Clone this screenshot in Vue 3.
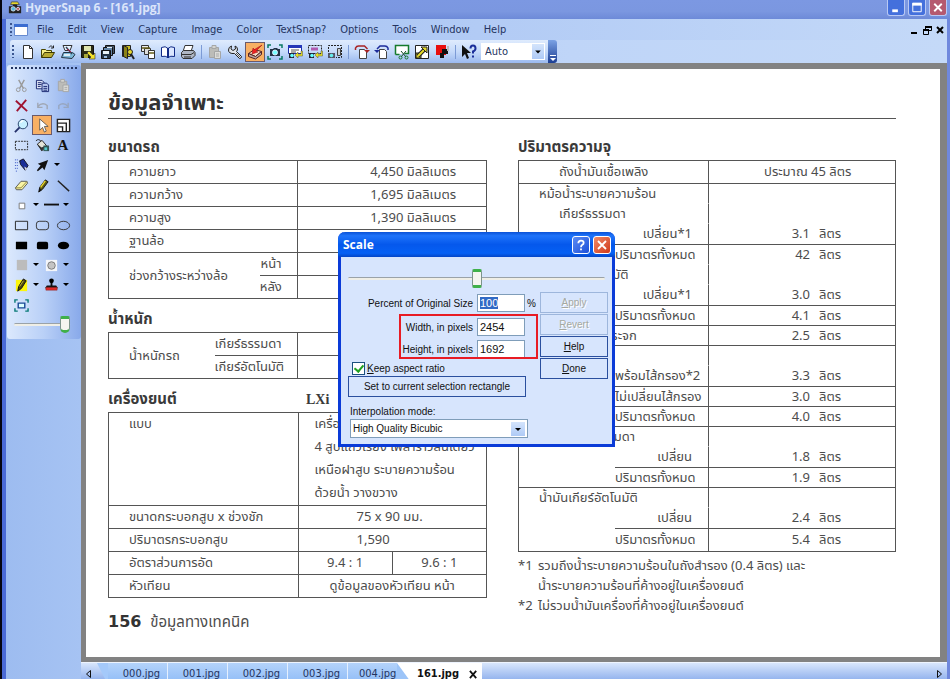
<script setup>
import { ref, onMounted } from 'vue'

const percentInput = ref(null)
const percent = ref('100')
const width = ref('2454')
const height = ref('1692')
const keepRatio = ref(true)
const scale = ref(50)
const opacity = ref(100)

onMounted(() => {
  percentInput.value.focus()
  percentInput.value.select()
})

const menus = ['File', 'Edit', 'View', 'Capture', 'Image', 'Color', 'TextSnap?', 'Options', 'Tools', 'Window', 'Help']

const icons = {
  new: '<path d="M3.500 1.500h6l3 3v10h-9z" fill="#fff" stroke="#333"/><path d="M9.500 1.500v3h3" fill="none" stroke="#333"/>',
  open: '<path d="M1.500 13.500V5.500h4l1 1h5v2" fill="#f6ef86" stroke="#4a4600"/><path d="M1.500 13.500l3-5h10l-3 5z" fill="#b8ab32" stroke="#3d3900"/><path d="M9 3.500c1-2 3-2 4 0M13.500 1.500v2.500h-2.500" fill="none" stroke="#222"/>',
  acquire: '<path d="M3 1.500h9l-2 5H5z" fill="#e8f4ff" stroke="#333"/><path d="M1.500 13.500l2-5h9l2.500 2-3 4z" fill="#7eb9d8" stroke="#234"/><path d="M6 3l6 7" stroke="#345" stroke-width="1.500"/><path d="M4 11h6" stroke="#fff" stroke-width="1.500"/><path d="M7 5l4 3" stroke="#b24"/>',
  save: '<path d="M1.500 1.500h12v12h-12z" fill="#2b2b14" stroke="#111"/><path d="M4 2h7v5H4z" fill="#dfe6b0"/><path d="M4 10h4v4H4z" fill="#a8a83a"/><path d="M15 15H9l2-2-4-4 2-2 4 4 2-2z" fill="#f2e12b" stroke="#333" stroke-width=".6"/>',
  saveall: '<path d="M5.500 1.500h9v8h-9z" fill="#456" stroke="#111"/><path d="M3.500 3.500h9v8h-9z" fill="#68a" stroke="#111"/><path d="M1.500 6.500h9v8h-9z" fill="#234" stroke="#111"/><path d="M3 7h6v3H3zM7 3h5v1H7z" fill="#e6f1f6"/><path d="M4 12h3v2H4z" fill="#9bd"/>',
  exit: '<path d="M2.500 1.500h8v11h-8z" fill="#ccc025" stroke="#222"/><path d="M3.500 1.500l4 2v11l-4-2z" fill="#8b8316" stroke="#222"/><circle cx="10" cy="8" r="2.500" fill="#e8d92f" stroke="#222"/><path d="M11 10l3 5" stroke="#222" stroke-width="2"/>',
  copyall: '<path d="M1.500 1.500h7v6h-7z" fill="#eee" stroke="#333"/><path d="M4.500 4.500h6v6h-6z" fill="#ddd" stroke="#333"/><path d="M8.500 6.500h6v8h-6z" fill="#fff" stroke="#333"/><path d="M2 4h8M9 9h5" stroke="#665f18" stroke-width="1.500"/>',
  book: '<path d="M1.500 3.500q4-2 6.500 1v9q-2.500-2-6.500-1z" fill="#fff" stroke="#112a86"/><path d="M14.500 3.500q-4-2-6.500 1v9q2.500-2 6.500-1z" fill="#dbe7ff" stroke="#112a86"/><path d="M8 4v10" stroke="#112a86" stroke-width="2"/>',
  print: '<path d="M5 1.500h8l-2 6H3z" fill="#fff" stroke="#333"/><path d="M1.500 8.500l2-2h10l1.500 2v3l-3 3h-9l-1.500-2z" fill="#aeb6c4" stroke="#333"/><path d="M2 10.500h9l3-2M4 13h7" stroke="#333" fill="none"/>',
  pasteoff: '<path d="M2.500 3.500h9v10h-9z" fill="#bcbcb8" stroke="#a5a6a6"/><path d="M5 1.500h4v3H5z" fill="#d5d5d0" stroke="#a5a6a6"/><path d="M7.500 7.500h6v7h-6z" fill="#dcdcd8" stroke="#a5a6a6"/><path d="M9 10h3M9 12h3" stroke="#aaa"/>',
  wrench: '<path d="M1.500 6q0-3 3-4L4 5l2 1.500L8.500 5l-.5-3q3 1 2.500 4L9.500 7.500l5 5q0 2-2 2l-5-5Q1.500 10 1.500 6z" fill="#dfe3ea" stroke="#222"/><path d="M9 9l4 4" stroke="#555"/>',
  quick: '<path d="M1.500 9.500l6-4 7 2-6 5z" fill="#f5dfc8" stroke="#522"/><path d="M1.500 9.500v3l7 2.500 6-4.500V7.500L8.500 12.500z" fill="#b9a6a0" stroke="#522"/><path d="M15 1L9 7l2 1-6 2 1-6 1.500 1.500z" fill="#e22" stroke="#911" stroke-width=".5"/>',
  camera: '<path d="M1 4V1h3M12 1h3v3M15 12v3h-3M4 15H1v-3" fill="none" stroke="#087a62" stroke-width="1.500"/><path d="M3 5h3l1-1h3l1 1h2v7H3z" fill="#234"/><circle cx="8" cy="8.500" r="2.500" fill="#7ff" stroke="#def"/>',
  win: '<path d="M1.500 1.500h13v8h-13z" fill="#fff" stroke="#1b2da8"/><path d="M1 1h14v3H1z" fill="#2436b8"/><path d="M4 6h8M4 8h5" stroke="#555"/><path d="M2 9h5v5H2z" fill="#223"/><circle cx="5" cy="11.500" r="1.800" fill="#6ff"/><path d="M8 11l3-3v2h3V7h1.500v5H11v2z" fill="#e8df22" stroke="#554" stroke-width=".5"/>',
  region: '<path d="M1.500 1.500h13v8h-13z" fill="none" stroke="#222" stroke-dasharray="2 1"/><path d="M4 5h7" stroke="#b05bb0" stroke-width="3"/><path d="M2 9h5v5H2z" fill="#223"/><circle cx="5" cy="11.500" r="1.800" fill="#6ff"/><path d="M8 11l3-3v2h3V7h1.500v5H11v2z" fill="#e8df22" stroke="#554" stroke-width=".5"/>',
  regionb: '<path d="M1.500 8V1.500h13v12H9" fill="none" stroke="#222" stroke-dasharray="2 1"/><path d="M1 9h7v5H1z" fill="#556"/><circle cx="4.500" cy="11.500" r="1.800" fill="#6ee"/><path d="M10.500 4.500h3v7h-3z" fill="#c8ced4" stroke="#444"/>',
  rotr: '<path d="M5.500 5.500h5l2 2v7h-7z" fill="#fff" stroke="#444"/><path d="M1.500 6V4q1-2 3-2h6l3 3" fill="none" stroke="#a82424" stroke-width="1.500"/><path d="M10 6h6l-3 3z" fill="#a82424"/>',
  rotl: '<path d="M5.500 5.500h5l2 2v7h-7z" fill="#fff" stroke="#444"/><path d="M14 6V4q-1-2-3-2H6L3 5" fill="none" stroke="#1c2b9a" stroke-width="1.500"/><path d="M0 6h6L3 9z" fill="#1c2b9a"/>',
  crop: '<path d="M1.500 10.500v-9h13v8h-4" fill="#fff" stroke="#157a2c" stroke-width="1.500"/><path d="M1.500 10.500h4" stroke="#157a2c" stroke-width="1.500"/><path d="M7 7l5 6M12 7l-5 6" stroke="#174b28"/><circle cx="6.500" cy="13.500" r="1.500" fill="none" stroke="#157a2c"/><circle cx="12.500" cy="13.500" r="1.500" fill="none" stroke="#157a2c"/>',
  resize: '<path d="M1.500 1.500h13v13h-13z" fill="#fff" stroke="#222"/><path d="M2 9h5v5H2z" fill="#d9cc22" stroke="#222"/><path d="M4 12l8-8" stroke="#222" stroke-width="4"/><path d="M4 12l8-8" stroke="#e8dd2a" stroke-width="2"/><path d="M7 3h6v6z" fill="#e8dd2a" stroke="#222"/>',
  color: '<path d="M2 1h10v10H2z" fill="#e80e0e"/><path d="M6 9h2V5l6 0v5H10v4H6z" fill="#111"/><path d="M13 2h2v5h-2z" fill="#bbb"/>',
  helpcur: '<path d="M1 1v12l3-3 2 5 2-1-2-5h4z" fill="#111"/><path d="M9.500 4.500q0-3 2.500-3t2.500 3q0 2-2.500 3v2" fill="none" stroke="#1c2f9a" stroke-width="2"/><path d="M11 11.500h2v2h-2z" fill="#1c2f9a"/>',
  cut: '<path d="M5 2l5 9M11 2L6 11" stroke="#999" stroke-width="1.500"/><circle cx="4.500" cy="12.500" r="2" fill="none" stroke="#999"/><circle cx="11" cy="12.500" r="2" fill="none" stroke="#999"/>',
  copy: '<path d="M1.500 2.500h6l2 2v7h-8z" fill="#dfe6f8" stroke="#16256f"/><path d="M7.500 5.500h5l2 2v7h-7z" fill="#b8c8f0" stroke="#16256f"/><path d="M3 5h4M3 7h4M3 9h3M9 9h4M9 11h4M9 13h4" stroke="#16256f"/>',
  del: '<path d="M2 3l12 11M13 2L3 14" stroke="#9f1230" stroke-width="2"/>',
  undo: '<path d="M3 5v5h5M3 9q5-5 10-1v4" fill="none" stroke="#a0a7b4" stroke-width="1.500"/>',
  redo: '<path d="M13 5v5H8M13 9Q8 4 3 8v4" fill="none" stroke="#97a6c0" stroke-width="1.500"/>',
  zoom: '<circle cx="9.500" cy="6.500" r="5" fill="#c8f1ff" stroke="#24406a"/><path d="M6 10l-5 5" stroke="#24306a" stroke-width="2"/><path d="M7 5q1-2 3-2" stroke="#fff" fill="none" stroke-width="1.500"/>',
  pointer: '<path d="M5 1v12l3-3 2 5 2-1-2-5h4z" fill="#fff" stroke="#444" stroke-width=".8"/>',
  scale: '<path d="M1.500 1.500h13v13h-13z" fill="#fff" stroke="#222" stroke-width="1.500"/><path d="M2 5.500h9v9M2 9.500h5v5" fill="none" stroke="#222" stroke-width="1.500"/>',
  select: '<path d="M1.500 3.500h13v9h-13z" fill="none" stroke="#222" stroke-dasharray="2 1"/>',
  fill: '<path d="M1 3q3-3 6 1" fill="none" stroke="#222"/><path d="M2.500 6.500l5-4 5 6-5 5z" fill="#e4e4d8" stroke="#222"/><path d="M2 6l5 4 5-2-5 6z" fill="#333"/><path d="M9 8h6v6H9z" fill="#355"/><path d="M10 10h3v3h-3z" fill="#5cc"/>',
  spray: '<path d="M6 3l4-2 5 7-3 5-5-6z" fill="#1a2e96" stroke="#112"/><path d="M11 9l3 2-2 2z" fill="#ddd"/><path d="M1 2h4M1 5h4M1 8h3M1 11h3M2 14h2" stroke="#2a49c0" stroke-dasharray="1 1"/>',
  arrow: '<path d="M14 2L3 6l3 2-4 5 1 1 5-4 2 3z" fill="#111"/>',
  eraser: '<path d="M1.500 10.500l6-7 6 0 1 2-6 7h-6z" fill="#faf4a4" stroke="#555"/><path d="M1.500 10.500h6l6.500-7" fill="none" stroke="#8b8540"/>',
  pencil: '<path d="M4 15l1-5 6-8 3 2-6 8z" fill="#5d5a16" stroke="#111"/><path d="M6 10l5-7" stroke="#e8d72a" stroke-width="1.500"/><path d="M4 15l1-4 2 2z" fill="#111"/>',
  line: '<path d="M2 3l12 11" stroke="#222" stroke-width="1.500"/>',
  small: '<path d="M5.500 5.500h6v6h-6z" fill="#fff" stroke="#777"/>',
  dash: '<path d="M0 7h16" stroke="#111" stroke-width="2"/>',
  rect: '<path d="M1.500 3.500h13v9h-13z" fill="none" stroke="#222"/>',
  rrect: '<rect x="1.500" y="3.500" width="13" height="9" rx="3" fill="none" stroke="#333"/>',
  oval: '<ellipse cx="8" cy="8" rx="6.500" ry="4.500" fill="none" stroke="#333"/>',
  rectf: '<path d="M2 4h12v8H2z"/>',
  rrectf: '<rect x="2" y="4" width="12" height="8" rx="2"/>',
  ovalf: '<ellipse cx="8" cy="8" rx="6" ry="4"/>',
  gray: '<path d="M3 2h11v11H3z" fill="#bcbcbc"/>',
  dot: '<path d="M2 2h12v12H2z" fill="#f4f6fa"/><circle cx="8" cy="8" r="4" fill="#c4c4c4" stroke="#777"/>',
  marker: '<path d="M2 2h12v12H2z" fill="#fcf60c"/><path d="M4 14l1-5 5-8 3 2-5 8z" fill="#4b4913" stroke="#111"/><path d="M6 9l4-6" stroke="#c8ba2a"/>',
  stamp: '<path d="M8 4v5" stroke="#111" stroke-width="2"/><circle cx="8" cy="3" r="2.500"/><path d="M3 8h10l2 3H1z" fill="#111"/><path d="M2 10h12v3H2z" fill="#e02a2a" stroke="#822" stroke-width=".5"/>',
  full: '<path d="M1 5V2h3M12 2h3v3M15 11v3h-3M4 14H1v-3" fill="none" stroke="#087a76" stroke-width="1.500"/><path d="M4.500 5.500h7v5h-7z" fill="#dff" stroke="#1a4a96" stroke-width="1.500"/>',
  drop: '<path d="M1 6h6l-3 3z"/>'
}

const tools = ['new', 'open', 'acquire', 'save', 'saveall', 'exit', 'copyall', 'book', 'print', '|', 'pasteoff', 'wrench', 'quick', 'camera', 'win', 'region', 'regionb', '|', 'rotr', 'rotl', 'crop', 'resize', 'color', '|', 'helpcur']

const palette = [
  ['cut', 'copy', 'pasteoff'],
  ['del', 'undo', 'redo'],
  ['zoom', 'pointer', 'scale'],
  ['select', 'fill', 'text'],
  ['spray', 'arrow', 'drop'],
  ['eraser', 'pencil', 'line'],
  ['small', 'drop', 'dash', 'drop'],
  ['rect', 'rrect', 'oval'],
  ['rectf', 'rrectf', 'ovalf'],
  ['gray', 'drop', 'dot', 'drop'],
  ['marker', 'drop', 'stamp', 'drop'],
  ['full']
]

// kind: item spans both label columns, step is right-aligned in the second one
const capacity = [
  { kind: 'item deep', label: 'ถังน้ำมันเชื้อเพลิง', whole: 'ประมาณ 45 ลิตร', h: 'r23', line: true },
  { kind: 'item', label: 'หม้อน้ำระบายความร้อน', h: 'r20' },
  { kind: 'item deep', label: 'เกียร์ธรรมดา', h: 'r20' },
  { kind: 'step', label: 'เปลี่ยน*1', n: '3.1', h: 'r21', line: true },
  { kind: 'step', label: 'ปริมาตรทั้งหมด', n: '42', h: 'r20' },
  { kind: 'item deep', label: 'เกียร์อัตโนมัติ', h: 'r20' },
  { kind: 'step', label: 'เปลี่ยน*1', n: '3.0', h: 'r21', line: true },
  { kind: 'step', label: 'ปริมาตรทั้งหมด', n: '4.1', h: 'r20', line: true, end: true },
  { kind: 'item', label: 'ถังพักน้ำล้างกระจก', n: '2.5', h: 'r20', line: true },
  { kind: 'item', label: 'น้ำมันเครื่อง', h: 'r20' },
  { kind: 'step', label: 'พร้อมไส้กรอง*2', n: '3.3', h: 'r21', line: true },
  { kind: 'step', label: 'ไม่เปลี่ยนไส้กรอง', n: '3.0', h: 'r20', line: true },
  { kind: 'step', label: 'ปริมาตรทั้งหมด', n: '4.0', h: 'r20', line: true, end: true },
  { kind: 'item', label: 'น้ำมันเกียร์ธรรมดา', h: 'r20' },
  { kind: 'step', label: 'เปลี่ยน', n: '1.8', h: 'r21', line: true },
  { kind: 'step', label: 'ปริมาตรทั้งหมด', n: '1.9', h: 'r20', line: true, end: true },
  { kind: 'item', label: 'น้ำมันเกียร์อัตโนมัติ', h: 'r20' },
  { kind: 'step', label: 'เปลี่ยน', n: '2.4', h: 'r21', line: true },
  { kind: 'step', label: 'ปริมาตรทั้งหมด', n: '5.4', h: 'r23', line: true, end: true }
]

const tabs = ['000.jpg', '001.jpg', '002.jpg', '003.jpg', '004.jpg']
</script>

<template>
  <div class="window">
    <header class="titlebar">
      <svg class="logo" viewBox="0 0 16 16"><path d="M4 1h7l2 3H3z" fill="#e8d92a" stroke="#554" /><path d="M1 6h4l1-2h4l1 2h4v8H1z" fill="#222" /><circle cx="6" cy="9" r="2.500" fill="#5bd" stroke="#dde" /><circle cx="11.500" cy="9" r="1.800" fill="#b55" stroke="#dde" /></svg>
      <h1>HyperSnap 6 - [161.jpg]</h1>
      <div class="controls">
        <button aria-label="Minimize"><svg viewBox="0 0 16 16"><path d="M4 10h6v3H4z" fill="#fff" /></svg></button>
        <button aria-label="Maximize"><svg viewBox="0 0 16 16"><path d="M3.500 3.500h9v9h-9z" fill="none" stroke="#fff" /><path d="M3 3h10v3H3z" fill="#fff" /></svg></button>
        <button class="close" aria-label="Close"><svg viewBox="0 0 16 16"><path d="M4 4l8 8M12 4l-8 8" stroke="#fff" stroke-width="2" /></svg></button>
      </div>
    </header>

    <nav class="menubar">
      <span class="grip"></span>
      <svg class="docicon" viewBox="0 0 14 12"><path d="M.5.500h13v11H.500z" fill="#fff" stroke="#678bd0" /><path d="M0 0h14v3H0z" fill="#3a6cd0" /></svg>
      <button v-for="m in menus" :key="m" class="menu">{{ m }}</button>
      <div class="docctl">
        <button aria-label="Minimize document"><svg viewBox="0 0 12 12"><path d="M3 8h6v2H3z" /></svg></button>
        <button aria-label="Restore document"><svg viewBox="0 0 12 12"><path d="M4.500 2.500h6v4h-6z" fill="none" stroke="#000" /><path d="M4 2h7v2H4z" /><path d="M2.500 6.500h5v4h-5z" fill="#c6daf8" stroke="#000" /><path d="M2 5h6v2H2z" /></svg></button>
        <button aria-label="Close document"><svg viewBox="0 0 12 12"><path d="M3 3l6 6M9 3L3 9" stroke="#000" stroke-width="2" /></svg></button>
      </div>
    </nav>

    <div class="toolrow">
      <div class="toolbar">
        <span class="grip"></span>
        <template v-for="(t, i) in tools" :key="i">
          <span v-if="t === '|'" class="sep"></span>
          <button v-else class="tool" :class="{ active: t === 'quick' }" :aria-label="t"><svg viewBox="0 0 16 16" v-html="icons[t]"></svg></button>
        </template>
        <div class="pick auto">
          <select aria-label="Zoom"><option>Auto</option></select>
          <svg viewBox="0 0 12 16"><path d="M3 7h6l-3 3z" /></svg>
        </div>
      </div>
      <button class="more" aria-label="Toolbar options"><svg viewBox="0 0 9 22"><path d="M2 14.500h6" stroke="#fff" /><path d="M2 17h6l-3 3z" fill="#fff" /></svg></button>
    </div>

    <div class="work">
      <aside class="dock">
        <div class="palette">
          <div v-for="(row, r) in palette" :key="r" class="prow">
            <button v-for="(p, i) in row" :key="i" :aria-label="p" :class="[p === 'drop' ? 'ddrop' : 'tool', { active: p === 'pointer' }]">
              <b v-if="p === 'text'" class="letter">A</b>
              <svg v-else :viewBox="p === 'drop' ? '0 0 8 16' : '0 0 16 16'" v-html="icons[p]"></svg>
            </button>
          </div>
          <input v-model="opacity" class="slider side" type="range" min="0" max="100" aria-label="Opacity" />
        </div>
      </aside>

      <div class="main">
        <div class="canvas">
          <article class="paper">
            <h2 class="doc-title">ข้อมูลจำเพาะ</h2>
            <div class="columns">
              <section>
                <h3>ขนาดรถ</h3>
                <table class="spec">
                  <colgroup><col class="c-a" /><col class="c-b" /><col class="c-v" /></colgroup>
                  <tbody>
                    <tr><td colspan="2">ความยาว</td><td class="num">4,450 มิลลิเมตร</td></tr>
                    <tr><td colspan="2">ความกว้าง</td><td class="num">1,695 มิลลิเมตร</td></tr>
                    <tr><td colspan="2">ความสูง</td><td class="num">1,390 มิลลิเมตร</td></tr>
                    <tr><td colspan="2">ฐานล้อ</td><td></td></tr>
                    <tr><td rowspan="2">ช่วงกว้างระหว่างล้อ</td><td class="sub">หน้า</td><td></td></tr>
                    <tr><td class="sub">หลัง</td><td></td></tr>
                  </tbody>
                </table>
                <h3>น้ำหนัก</h3>
                <table class="spec wide">
                  <colgroup><col class="c-a" /><col class="c-b" /><col class="c-v" /></colgroup>
                  <tbody>
                    <tr><td rowspan="2">น้ำหนักรถ</td><td class="sub">เกียร์ธรรมดา</td><td></td></tr>
                    <tr><td class="sub">เกียร์อัตโนมัติ</td><td></td></tr>
                  </tbody>
                </table>
                <h3 class="engine"><span>เครื่องยนต์</span><span class="trim">LXi</span></h3>
                <table class="spec eng">
                  <colgroup><col class="c-l" /><col class="c-q" /><col class="c-q" /></colgroup>
                  <tbody>
                    <tr class="tall"><td>แบบ</td><td colspan="2" class="desc">เครื่องยนต์<br />4 สูบแถวเรียง เพลาราวลิ้นเดี่ยว<br />เหนือฝาสูบ ระบายความร้อน<br />ด้วยน้ำ วางขวาง</td></tr>
                    <tr><td>ขนาดกระบอกสูบ x ช่วงชัก</td><td colspan="2" class="mid">75 x 90 มม.</td></tr>
                    <tr><td>ปริมาตรกระบอกสูบ</td><td colspan="2" class="mid">1,590</td></tr>
                    <tr><td>อัตราส่วนการอัด</td><td class="ratio">9.4 : 1</td><td class="ratio">9.6 : 1</td></tr>
                    <tr><td>หัวเทียน</td><td colspan="2" class="center">ดูข้อมูลของหัวเทียน หน้า</td></tr>
                  </tbody>
                </table>
                <p class="folio"><b>156</b> ข้อมูลทางเทคนิค</p>
              </section>

              <section>
                <h3>ปริมาตรความจุ</h3>
                <table class="cap">
                  <colgroup><col class="k-a" /><col class="k-b" /><col class="k-v" /></colgroup>
                  <tbody>
                    <tr v-for="(c, i) in capacity" :key="i" :class="[c.h, { line: c.line, end: c.end }]">
                      <td v-if="c.kind.startsWith('item')" colspan="2" :class="c.kind">{{ c.label }}</td>
                      <template v-else><td class="pad"></td><td class="step">{{ c.label }}</td></template>
                      <td class="val"><span v-if="c.whole" class="whole">{{ c.whole }}</span><span v-else-if="c.n" class="pair"><span>{{ c.n }}</span><span>ลิตร</span></span></td>
                    </tr>
                  </tbody>
                </table>
                <dl class="notes">
                  <dt>*1</dt>
                  <dd>รวมถึงน้ำระบายความร้อนในถังสำรอง (0.4 ลิตร) และ<br />น้ำระบายความร้อนที่ค้างอยู่ในเครื่องยนต์</dd>
                  <dt>*2</dt>
                  <dd>ไม่รวมน้ำมันเครื่องที่ค้างอยู่ในเครื่องยนต์</dd>
                </dl>
              </section>
            </div>
          </article>
        </div>

        <div class="tabstrip">
          <button class="scroll" aria-label="Previous tabs"><svg viewBox="0 0 8 10"><path d="M5.500 1.500v7l-4-3.500z" fill="none" stroke="#111" /></svg></button>
          <svg class="slant" viewBox="0 0 14 20" preserveAspectRatio="none"><path d="M0 0h14v20z" fill="#a4c9fa" /></svg>
          <button v-for="t in tabs" :key="t" class="tab">{{ t }}</button>
          <svg class="slant last" viewBox="0 0 14 20" preserveAspectRatio="none"><path d="M0 0L14 20H0z" fill="#9cc4f8" /></svg>
          <div class="tab current"><span>161.jpg</span><button aria-label="Close tab"><svg viewBox="0 0 10 10"><path d="M1 1l7 8M8 1L1 9" stroke="#111" stroke-width="2" /></svg></button></div>
          <button class="scroll next" aria-label="Next tabs"><svg viewBox="0 0 8 10"><path d="M2.500 1.500v7l4-3.500z" fill="none" stroke="#111" /></svg></button>
        </div>
      </div>
    </div>

    <form class="dialog" role="dialog" aria-label="Scale" @submit.prevent>
      <div class="dtitle">
        <h2>Scale</h2>
        <button type="button" class="q" aria-label="What's this?"><svg viewBox="0 0 18 18"><path d="M6 7q0-3 3-3t3 2.500q0 1.500-1.500 2.300T9 11.500" fill="none" stroke="#fff" stroke-width="2" /><path d="M8 13h2v2H8z" fill="#fff" /></svg></button>
        <button type="button" class="x" aria-label="Close"><svg viewBox="0 0 18 18"><path d="M4.500 4.500l9 9M13.500 4.500l-9 9" stroke="#fff" stroke-width="2" /></svg></button>
      </div>
      <div class="dbody">
        <input v-model="scale" class="slider wideslide" type="range" min="0" max="100" aria-label="Scale" />
        <div class="dmain">
          <div class="fields">
            <div class="field first">
              <label for="pct">Percent of Original Size</label>
              <input id="pct" ref="percentInput" v-model="percent" type="text" />
              <span class="unit">%</span>
            </div>
            <div class="marked">
              <div class="field"><label for="wpx">Width, in pixels</label><input id="wpx" v-model="width" type="text" /></div>
              <div class="field"><label for="hpx">Height, in pixels</label><input id="hpx" v-model="height" type="text" /></div>
            </div>
          </div>
          <div class="actions">
            <button type="button" disabled><u>A</u>pply</button>
            <button type="button" disabled><u>R</u>evert</button>
            <button type="button"><u>H</u>elp</button>
            <button type="button"><u>D</u>one</button>
          </div>
        </div>
        <div class="rest">
          <label class="keep"><input v-model="keepRatio" type="checkbox" /><span><u>K</u>eep aspect ratio</span></label>
          <button type="button" class="setsel">Set to current selection rectangle</button>
          <label class="modelabel" for="mode">Interpolation mode:</label>
          <div class="pick mode">
            <select id="mode"><option>High Quality Bicubic</option></select>
            <svg viewBox="0 0 14 14"><path d="M4 6h6l-3 3z" /></svg>
          </div>
        </div>
      </div>
    </form>
  </div>
</template>

<style>
body { overflow: hidden; background: #000; }
</style>

<style scoped>
* { box-sizing: border-box; }
button { border: 0; padding: 0; margin: 0; background: none; font: inherit; color: inherit; }
svg { display: block; flex: none; }
h1, h2, h3, p, dl, dd { margin: 0; }

.window {
  position: relative;
  display: flex;
  flex-direction: column;
  height: 100vh;
  overflow: hidden;
  padding: 0 3px 0 4px;
  border-left: 2px solid #05050f;
  background: #c3d9f8;
  box-shadow: inset 4px 0 #4a6ad6, inset -3px 0 #6f88dd;
  font-family: "DejaVu Sans Condensed", "DejaVu Sans", sans-serif;
  font-size: 11px;
  color: #24345f;
}

.titlebar { display: flex; align-items: center; gap: 3px; height: 19px; flex: none; margin: 0 -3px 0 -4px; padding: 0 3px 3px 6px; background: linear-gradient(#7c98e2, #7b97e0 60%, #6d8ad8); }
.logo { width: 14px; height: 14px; }
.titlebar h1 { flex: 1; font: bold 12px/16px "Open Sans", "Noto Sans", sans-serif; color: #dbe5fa; }
.controls { display: flex; gap: 3px; }
.controls button { width: 18px; height: 16px; border: 1px solid #b9c9f4; border-top: 0; border-radius: 0 0 3px 3px; background: #4470dc; }
.controls .close { background: #b5596f; }
.controls svg { width: 16px; height: 15px; }

.menubar { display: flex; align-items: center; height: 21px; flex: none; padding: 0 1px 0 4px; background: linear-gradient(90deg, #9fbdf0, #b2cbf5 50%, #c4d9f8); }
.grip { width: 2px; height: 13px; flex: none; background: repeating-linear-gradient(#3a5590 0 2px, transparent 2px 4px); }
.docicon { width: 14px; height: 12px; margin: 0 2px; }
.menu { padding: 0 7px; line-height: 20px; }
.docctl { display: flex; gap: 1px; margin-left: auto; }
.docctl svg { width: 12px; height: 12px; }

.toolrow { display: flex; height: 23px; flex: none; padding-left: 4px; background: linear-gradient(90deg, #a5c1f2, #bfd5f8 60%, #c4d9f8); }
.toolbar { display: flex; align-items: center; padding: 0 3px 0 2px; border-radius: 3px 0 0 3px; background: linear-gradient(#dfebfd, #c5dafa 50%, #9bb9ee); }
.toolbar .grip { margin-right: 4px; }
.tool { display: flex; align-items: center; justify-content: center; width: 20px; height: 20px; flex: none; border: 1px solid transparent; }
.tool svg { width: 16px; height: 16px; }
.palette .tool svg { width: 15px; height: 15px; }
.tool.active { background: #f8b064; border-color: #6a5a6c; }
.sep { width: 1px; height: 14px; margin: 0 3px; background: #7c9bd6; }
.pick { display: grid; align-items: center; background: #fff; }
.pick select { grid-area: 1 / 1; width: 100%; height: 100%; margin: 0; border: 0; padding: 0 4px; background: transparent; appearance: none; font: inherit; color: inherit; outline: 0; }
.pick svg { grid-area: 1 / 1; justify-self: end; background: linear-gradient(#d4e4fc, #aecaf6); pointer-events: none; }
.auto { width: 64px; height: 17px; margin-left: 2px; }
.auto svg { width: 12px; height: 15px; margin-right: 1px; }
.more { width: 9px; background: linear-gradient(#7ba2e4, #1c3e94); border-radius: 0 3px 3px 0; }
.more svg { width: 9px; height: 22px; }

.work { display: flex; flex: 1; min-height: 0; }
.dock { width: 75px; flex: none; background: linear-gradient(90deg, #9dbcf0, #a6c3f3); padding: 2px 0 0 1px; }
.palette { padding: 10px 4px 6px; border-radius: 3px; background: linear-gradient(90deg, #dce9fd, #b9d0f7 50%, #88a9ea); }
.palette::before { content: ""; display: block; height: 2px; margin-top: -8px; margin-bottom: 6px; background: repeating-linear-gradient(90deg, #223460 0 2px, transparent 2px 4px); }
.prow { display: flex; gap: 1px; height: 20px; }
.ddrop { width: 8px; }
.ddrop svg { width: 8px; height: 16px; }
.letter { font: bold 15px/18px "Liberation Serif", serif; color: #111; }

.slider { appearance: none; display: block; margin: 0; background: transparent; outline: 0; }
.slider::-webkit-slider-runnable-track { height: 3px; border-radius: 2px; background: #efeee6; border-top: 1px solid #9aa2a8; }
.slider::-webkit-slider-thumb { appearance: none; width: 10px; height: 19px; margin-top: -9px; border: 1px solid #7d948c; border-top: 3px solid #3fb04a; border-bottom: 3px solid #3fb04a; border-radius: 2px; background: #f5f5f0; }
.side { width: 56px; height: 18px; margin-left: 3px; }
.side::-webkit-slider-thumb { height: 17px; border-radius: 2px 2px 5px 5px; margin-top: -8px; }

.main { display: flex; flex: 1; flex-direction: column; min-width: 0; }
.canvas { flex: 1; min-height: 0; border: 5px solid #828282; border-top-width: 6px; border-right-width: 7px; background: #fff; overflow: hidden; }
.paper { padding: 22px 44px 0 22px; font-family: "Noto Sans Thai", Roboto, "Liberation Sans", sans-serif; font-size: 13px; color: #4c4c4c; white-space: nowrap; }
.doc-title { height: 28px; border-bottom: 1px solid #555; font-size: 22px; line-height: 26px; color: #333; }
.columns { display: grid; grid-template-columns: minmax(0, 379fr) minmax(0, 378fr); column-gap: 31px; padding-top: 17px; }
.columns h3 { height: 24px; font-size: 15px; line-height: 24px; color: #3a3a3a; }
.spec, .cap { width: 100%; table-layout: fixed; border-collapse: separate; border-spacing: 0; border: solid #555; border-width: 1px 1px 0 1px; }
td { padding: 0; height: 23px; border-bottom: 1px solid #555; line-height: 18px; }
.c-a { width: 40%; } .c-b { width: 10%; } .c-v { width: 50%; }
.wide .c-a { width: 28%; } .wide .c-b { width: 22%; }
.c-l { width: 50%; } .c-q { width: 25%; }
.spec td:first-child:not(.sub) { padding-left: 20px; }
.spec td:last-child, .spec .ratio { border-left: 1px solid #555; }
.num { padding-right: 30px; text-align: right; }
.sub { padding-right: 16px; text-align: right; }
.spec + h3 { margin-top: 9px; }
.engine { display: flex; }
.engine span { flex: 1; }
.engine .trim { padding-left: 17px; font-family: "Liberation Serif", serif; font-size: 14px; }
.tall td { height: 93px; vertical-align: top; line-height: 23px; }
.desc { padding-left: 16px; }
.mid { padding-left: 58px; }
.ratio { text-align: center; }
.center { text-align: center; }
.folio { margin-top: 11px; font-size: 15px; line-height: 26px; }
.folio b { font: bold 16px/26px "DejaVu Sans", sans-serif; margin-right: 5px; color: #333; }

.k-a { width: 96px; } .k-b { width: 93px; }
.cap td { border-bottom-color: transparent; }
.r20 td { height: 20px; } .r21 td { height: 21px; } .r23 td { height: 23px; }
.cap .line td:not(.pad) { border-bottom-color: #555; }
.cap .end td.pad { border-bottom-color: #555; }
.item { padding-left: 20px; }
.deep { padding-left: 40px; }
.step { padding-right: 16px; text-align: right; }
.val { border-left: 1px solid #555; background: #fff; background-clip: padding-box; }
.whole { padding-left: 55px; }
.pair { display: flex; gap: 9px; }
.pair span:first-child { width: 101px; text-align: right; }
.notes { display: grid; grid-template-columns: 20px 1fr; padding-top: 4px; line-height: 20px; }

.tabstrip { display: flex; height: 17px; flex: none; border-top: 1px solid #eef4fe; overflow: hidden; background: linear-gradient(#d8e6fc, #96b5ee 16px); }
.tabstrip > * { height: 22px; flex: none; }
.scroll { width: 16px; padding: 6px 4px; }
.scroll svg { width: 8px; height: 10px; }
.next { margin-left: auto; }
.slant { width: 11px; }
.slant.last { width: 16px; background: #fff; }
.tab { width: 60px; padding-left: 8px; border-right: 1px solid #e4effe; background: linear-gradient(#b4d3fb, #8bb9f6); line-height: 22px; }
.tab:nth-last-child(4) { border-right: 0; width: 49px; padding-left: 11px; text-align: left; }
.current { display: flex; align-items: center; justify-content: space-between; width: 69px; padding: 0 4px; border-right: 0; background: #fff; font-weight: bold; color: #111; }
.current svg { width: 9px; height: 9px; }

.dialog { position: absolute; left: 336px; top: 232px; width: 277px; border: 3px solid #0a3bd8; border-top: 0; border-radius: 7px 7px 0 0; background: #d7e5fd; font-family: "Liberation Sans", sans-serif; font-size: 10px; color: #111; }
.dtitle { display: flex; align-items: center; gap: 3px; height: 25px; margin: 0 -3px; padding: 0 4px 0 5px; border-radius: 7px 7px 0 0; background: linear-gradient(#0a51d6, #1e73fa 15%, #0558ec 50%, #0560f4 85%, #0445c6); }
.dtitle h2 { flex: 1; font: bold 12px/20px "Open Sans", "Noto Sans", sans-serif; color: #fff; }
.dtitle button { width: 18px; height: 18px; border: 1px solid #fff; border-radius: 3px; }
.dtitle svg { width: 16px; height: 16px; }
.q { background: linear-gradient(135deg, #5c8cf4, #1c4fd8); }
.x { background: linear-gradient(135deg, #f08a68, #d0391a); }
.dbody { padding: 11px 4px 6px 7px; }
.wideslide { width: 257px; height: 20px; }
.dmain { display: flex; gap: 2px; padding-top: 4px; }
.fields { display: flex; flex: 1; flex-direction: column; align-items: flex-end; }
.field { display: flex; align-items: center; justify-content: flex-end; gap: 4px; height: 22px; }
.field input { width: 48px; height: 18px; border: 1px solid #7f9db9; border-radius: 0; padding: 0 2px; background: #fff; font: inherit; font-size: 11px; color: #111; outline: 0; }
.field input::selection { background: #316ac5; color: #fff; }
.unit { width: 9px; margin-left: -2px; margin-right: 2px; }
.marked { width: 139px; height: 45px; padding-right: 11px; border: 2px solid #e81c24; overflow: hidden; }
.actions { display: flex; flex-direction: column; gap: 1px; width: 68px; }
.actions button, .setsel { height: 21px; border: 1px solid #2a4f9e; background: #d7e5fd; }
.actions button:disabled { border-color: #9db6dc; color: #a5a8a0; text-shadow: 1px 1px #fff; }
.rest { margin-top: -19px; width: 180px; }
.keep { display: flex; align-items: center; gap: 2px; height: 16px; margin-left: 4px; }
.keep input { appearance: none; width: 13px; height: 13px; margin: 0; border: 1px solid #1c5180; background: #fff; display: grid; place-items: center; }
.keep input:checked::before { content: ""; width: 4px; height: 7px; margin-top: -2px; border: solid #21a121; border-width: 0 2px 2px 0; transform: rotate(40deg); }
.setsel { display: block; width: 178px; }
.modelabel { display: block; margin-top: 7px; margin-left: 2px; line-height: 15px; }
.mode { width: 178px; height: 19px; margin-left: 2px; border: 1px solid #7f9db9; }
.mode select { padding: 0 2px; }
.mode svg { width: 14px; height: 14px; margin-right: 2px; }
</style>
